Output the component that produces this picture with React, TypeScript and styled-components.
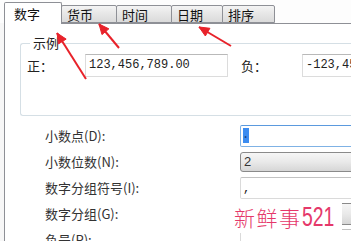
import React from "react";
import styled, { createGlobalStyle } from "styled-components";

const Global = createGlobalStyle`
  html, body { margin: 0; padding: 0; overflow: hidden; background: #fff; }
  * { box-sizing: border-box; }
`;

const cjk = `"Noto Sans CJK SC", "Noto Sans", sans-serif`;

const Screen = styled.div`
  position: relative;
  width: 351px;
  height: 241px;
  overflow: hidden;
  background: #f7f7f7;
  font-family: ${cjk};
  font-size: 13px;
  color: #222;
`;

const TabStrip = styled.div`
  display: flex;
  align-items: flex-end;
  height: 23px;
  padding-left: 4px;
  background: #fdfdfd;
  position: relative;
  z-index: 1;
`;

const Tab = styled.div<{ $active?: boolean; $w: number }>`
  width: ${(p) => p.$w}px;
  height: ${(p) => (p.$active ? 22 : 18)}px;
  margin-bottom: ${(p) => (p.$active ? -1 : 0)}px;
  margin-right: -1px;
  padding-left: ${(p) => (p.$active ? 9 : 5)}px;
  padding-top: ${(p) => (p.$active ? 3 : 1)}px;
  line-height: 15px;
  border: 1px solid #8e9096;
  border-bottom: ${(p) => (p.$active ? "none" : "1px solid #8e9096")};
  border-radius: 2px 2px 0 0;
  background: ${(p) =>
    p.$active ? "#fff" : "linear-gradient(#f4f4f4, #e6e6e6 50%, #dadada)"};
  color: #111;
`;

const Panel = styled.div`
  margin-left: 4px;
  height: 218px;
  border-top: 1px solid #8e9096;
  border-left: 1px solid #8e9096;
  background: #fff;
  padding-top: 12px;
`;

const Sample = styled.fieldset`
  margin: 0 0 0 15px;
  padding: 4px 0 0 6px;
  height: 80px;
  width: 340px;
  border: 1px solid #d5dfe5;
  border-right: none;
  border-radius: 3px 0 0 3px;
`;

const Legend = styled.legend`
  margin-left: 3px;
  padding: 0 3px;
  line-height: 14px;
  color: #222;
`;

const SampleRow = styled.div`
  display: flex;
  align-items: center;
  height: 23px;
`;

const SampleLabel = styled.span<{ $w: number }>`
  width: ${(p) => p.$w}px;
  flex: none;
`;

const SampleBox = styled.div`
  flex: none;
  width: 143px;
  height: 23px;
  margin-right: 13px;
  padding-left: 3px;
  border: 1px solid #dcdcdc;
  border-top-color: #b9b9b9;
  background: #fff;
  font-family: "Liberation Mono", "DejaVu Sans Mono", monospace;
  font-size: 12px;
  line-height: 21px;
  color: #222;
  white-space: nowrap;
`;

const Form = styled.div`
  display: grid;
  grid-template-columns: 195px 160px;
  grid-auto-rows: 26px;
  margin-top: 7px;
  padding-left: 40px;
`;

const Label = styled.div`
  align-self: center;
  color: #333;
  line-height: 16px;
  white-space: nowrap;
`;

const TextBox = styled.div<{ $focus?: boolean }>`
  align-self: center;
  height: 22px;
  padding-left: 2px;
  border: 1px solid ${(p) => (p.$focus ? "#7fb2e5" : "#dadada")};
  border-top-color: ${(p) => (p.$focus ? "#5b9ade" : "#c2c2c2")};
  border-radius: 2px 0 0 2px;
  background: #fff;
  font-family: "Liberation Mono", monospace;
  font-size: 12px;
  line-height: 22px;
`;

const Selected = styled.span`
  display: inline-block;
  width: 6px;
  height: 15px;
  margin-top: 2px;
  vertical-align: top;
  background: #3c8cf0;
  color: #1d3f7a;
  line-height: 15px;
  text-indent: -1px;
`;

const Combo = styled.div<{ $h: number }>`
  align-self: center;
  height: ${(p) => p.$h}px;
  padding-left: 3px;
  border: 1px solid #8a8a8a;
  border-radius: 3px 0 0 3px;
  background: linear-gradient(#f6f6f6, #e9e9e9 50%, #d6d6d6);
  font-family: "Liberation Sans", Arial, sans-serif;
  font-size: 13px;
  line-height: ${(p) => p.$h - 2}px;
  color: #333;
`;

const Watermark = styled.div`
  position: absolute;
  left: 228px;
  top: 201px;
  width: 114px;
  height: 32px;
  padding-left: 6px;
  background: #fff;
  color: #e5386a;
  white-space: nowrap;
  line-height: 32px;
`;

const MarkCjk = styled.span`
  font-family: ${cjk};
  font-weight: 300;
  font-size: 21px;
  letter-spacing: 1.5px;
`;

const MarkNum = styled.span`
  display: inline-block;
  font-family: "Liberation Sans", sans-serif;
  font-size: 27px;
  transform: scaleX(0.72);
  transform-origin: left center;
  vertical-align: top;
`;

const Arrows = styled.svg`
  position: absolute;
  left: 0;
  top: 0;
  z-index: 2;
  pointer-events: none;
`;

type Arrow = { x1: number; y1: number; x2: number; y2: number };

const arrows: Arrow[] = [
  { x1: 86, y1: 79, x2: 57, y2: 33 },
  { x1: 119, y1: 48, x2: 99, y2: 24 },
  { x1: 231, y1: 46, x2: 199, y2: 27 },
];

function head(a: Arrow) {
  const ang = Math.atan2(a.y2 - a.y1, a.x2 - a.x1);
  const len = 11;
  const spread = 0.42;
  const p1 = [a.x2 - len * Math.cos(ang - spread), a.y2 - len * Math.sin(ang - spread)];
  const p2 = [a.x2 - len * Math.cos(ang + spread), a.y2 - len * Math.sin(ang + spread)];
  return `${a.x2},${a.y2} ${p1.join(",")} ${p2.join(",")}`;
}

const tabs = [
  { name: "数字", w: 58, active: true },
  { name: "货币", w: 56 },
  { name: "时间", w: 56 },
  { name: "日期", w: 52 },
  { name: "排序", w: 53 },
];

export default function App() {
  return (
    <Screen>
      <Global />
      <TabStrip>
        {tabs.map((t) => (
          <Tab key={t.name} $w={t.w} $active={t.active}>
            {t.name}
          </Tab>
        ))}
      </TabStrip>
      <Panel>
        <Sample>
          <Legend>示例</Legend>
          <SampleRow>
            <SampleLabel $w={58}>正：</SampleLabel>
            <SampleBox>123,456,789.00</SampleBox>
            <SampleLabel $w={61}>负：</SampleLabel>
            <SampleBox>-123,456,789.00</SampleBox>
          </SampleRow>
        </Sample>
        <Form>
          <Label>小数点(D):</Label>
          <TextBox $focus>
            <Selected>.</Selected>
          </TextBox>
          <Label>小数位数(N):</Label>
          <Combo $h={20}>2</Combo>
          <Label>数字分组符号(I):</Label>
          <TextBox>,</TextBox>
          <Label>数字分组(G):</Label>
          <Combo $h={22} />
          <Label>负号(R):</Label>
          <TextBox />
        </Form>
      </Panel>
      <Watermark>
        <MarkCjk>新鲜事</MarkCjk>
        <MarkNum>521</MarkNum>
      </Watermark>
      <Arrows width={351} height={241}>
        {arrows.map((a, i) => (
          <g key={i} fill="#e8222a" stroke="#e8222a">
            <line x1={a.x1} y1={a.y1} x2={a.x2} y2={a.y2} strokeWidth={2} />
            <polygon points={head(a)} strokeWidth={1} />
          </g>
        ))}
      </Arrows>
    </Screen>
  );
}
